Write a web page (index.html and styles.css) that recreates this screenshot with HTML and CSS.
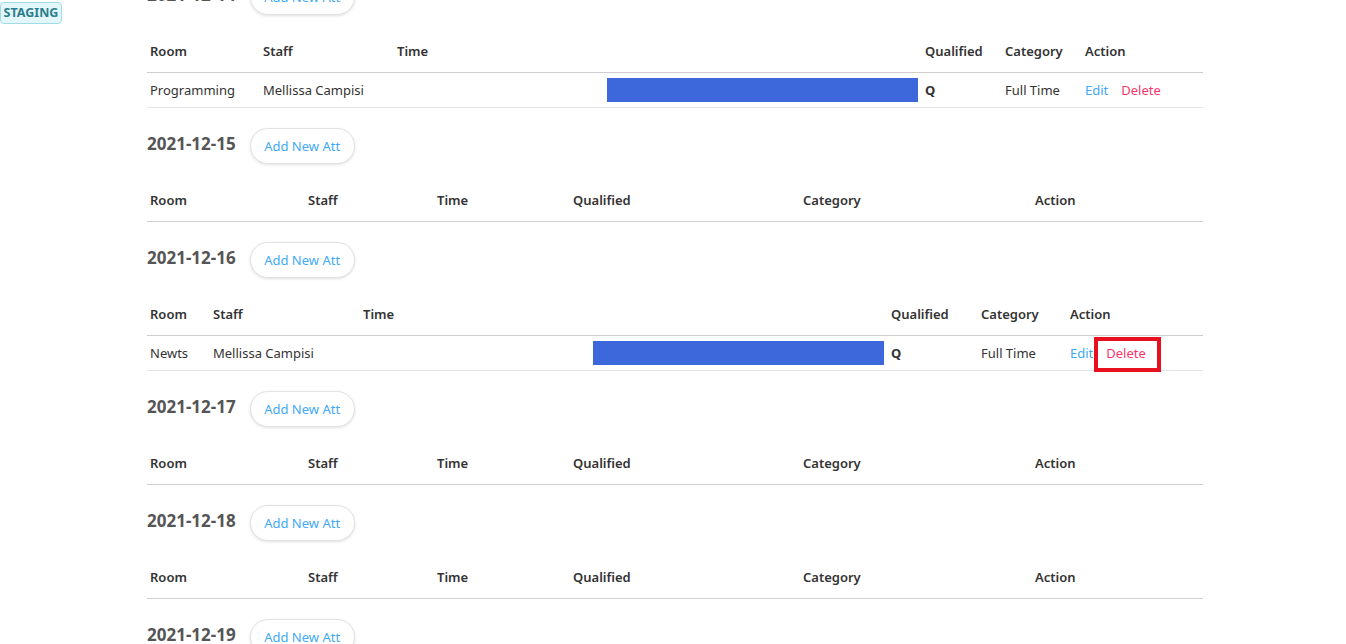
FILE: index.html
```html
<!DOCTYPE html>
<html>
<head>
<meta charset="utf-8">
<link rel="stylesheet" href="styles.css">
</head>
<body>
<div class="badge">STAGING</div>
<main class="page">
  <section class="day">
    <div class="day-head"><h2 class="date">2021-12-14</h2><button class="add-btn">Add New Att</button></div>
    <table class="att">
      <colgroup><col class="a1"><col class="a2"><col class="a3"><col class="a4"><col class="a5"><col class="a6"></colgroup>
      <thead><tr><th>Room</th><th>Staff</th><th>Time</th><th>Qualified</th><th>Category</th><th>Action</th></tr></thead>
      <tbody><tr><td>Programming</td><td>Mellissa Campisi</td><td class="time"><div class="bar" style="margin-left:213px;width:311px"></div></td><td class="q">Q</td><td>Full Time</td><td><div class="actions"><a class="edit">Edit</a><a class="del">Delete</a></div></td></tr></tbody>
    </table>
  </section>
  <section class="day">
    <div class="day-head"><h2 class="date">2021-12-15</h2><button class="add-btn">Add New Att</button></div>
    <table class="att">
      <colgroup><col class="e1"><col class="e2"><col class="e3"><col class="e4"><col class="e5"><col class="e6"></colgroup>
      <thead><tr><th>Room</th><th>Staff</th><th>Time</th><th>Qualified</th><th>Category</th><th>Action</th></tr></thead>
    </table>
  </section>
  <section class="day">
    <div class="day-head"><h2 class="date">2021-12-16</h2><button class="add-btn">Add New Att</button></div>
    <table class="att">
      <colgroup><col class="b1"><col class="b2"><col class="b3"><col class="b4"><col class="b5"><col class="b6"></colgroup>
      <thead><tr><th>Room</th><th>Staff</th><th>Time</th><th>Qualified</th><th>Category</th><th>Action</th></tr></thead>
      <tbody><tr><td>Newts</td><td>Mellissa Campisi</td><td class="time"><div class="bar" style="margin-left:233px;width:291px"></div></td><td class="q">Q</td><td>Full Time</td><td><div class="actions"><a class="edit">Edit</a><a class="del marked">Delete</a></div></td></tr></tbody>
    </table>
  </section>
  <section class="day">
    <div class="day-head"><h2 class="date">2021-12-17</h2><button class="add-btn">Add New Att</button></div>
    <table class="att">
      <colgroup><col class="e1"><col class="e2"><col class="e3"><col class="e4"><col class="e5"><col class="e6"></colgroup>
      <thead><tr><th>Room</th><th>Staff</th><th>Time</th><th>Qualified</th><th>Category</th><th>Action</th></tr></thead>
    </table>
  </section>
  <section class="day">
    <div class="day-head"><h2 class="date">2021-12-18</h2><button class="add-btn">Add New Att</button></div>
    <table class="att">
      <colgroup><col class="e1"><col class="e2"><col class="e3"><col class="e4"><col class="e5"><col class="e6"></colgroup>
      <thead><tr><th>Room</th><th>Staff</th><th>Time</th><th>Qualified</th><th>Category</th><th>Action</th></tr></thead>
    </table>
  </section>
  <section class="day">
    <div class="day-head"><h2 class="date">2021-12-19</h2><button class="add-btn">Add New Att</button></div>
  </section>
</main>
</body>
</html>
```

FILE: styles.css
```css
html, body {
  margin: 0;
  padding: 0;
  background: #fff;
  overflow: hidden;
}
body {
  font-family: "Noto Sans", "Open Sans", sans-serif;
  font-size: 13px;
  color: #333;
}
.badge {
  position: fixed;
  top: 2px;
  left: 0;
  width: 62px;
  height: 22px;
  box-sizing: border-box;
  border: 1px solid #9fdbe5;
  border-radius: 4px;
  background: #e3f6f9;
  color: #2b7e8e;
  font-weight: 700;
  font-size: 12.5px;
  line-height: 20px;
  text-align: center;
}
.page {
  width: 1056px;
  margin: -21px 0 0 147px;
}
.day {
  margin-bottom: 20px;
}
.day-head {
  display: flex;
  align-items: center;
  gap: 14px;
  height: 36px;
}
.date {
  margin: 0;
  font-size: 17px;
  font-weight: 700;
  color: #555;
  position: relative;
  top: -3px;
}
.add-btn {
  height: 36px;
  padding: 0 13.5px;
  border: 1px solid #e2e2e2;
  border-radius: 18px;
  background: #fff;
  box-shadow: 0 1px 3px rgba(0,0,0,0.12);
  font-family: inherit;
  font-size: 13px;
  color: #3fa9f5;
}
.att {
  width: 100%;
  margin-top: 12px;
  border-collapse: collapse;
  table-layout: fixed;
}
.att th {
  text-align: left;
  font-weight: 600;
  color: #333;
  padding: 14px 3px 11px;
  line-height: 20px;
  border-bottom: 1px solid #cfcfd2;
}
.att td {
  padding: 7px 3px;
  line-height: 20px;
  border-bottom: 1px solid #e1e5ea;
  vertical-align: middle;
  white-space: nowrap;
}
.att td.time {
  padding: 5px 0;
}
.bar {
  height: 24px;
  background: #3d68dc;
}
.q { font-weight: 700; }
.actions {
  display: flex;
  gap: 13px;
}
.edit { color: #3fa9f5; }
.del { color: #f5366c; position: relative; }
.marked::after {
  content: "";
  position: absolute;
  top: -6px;
  bottom: -9px;
  left: -12px;
  right: -15px;
  border: 4px solid #e8101e;
}
.a1 { width: 113px; } .a2 { width: 134px; } .a3 { width: 528px; }
.a4 { width: 80px; } .a5 { width: 80px; } .a6 { width: 121px; }
.b1 { width: 63px; } .b2 { width: 150px; } .b3 { width: 528px; }
.b4 { width: 90px; } .b5 { width: 89px; } .b6 { width: 136px; }
.e1 { width: 158px; } .e2 { width: 129px; } .e3 { width: 136px; }
.e4 { width: 230px; } .e5 { width: 232px; } .e6 { width: 171px; }
```
